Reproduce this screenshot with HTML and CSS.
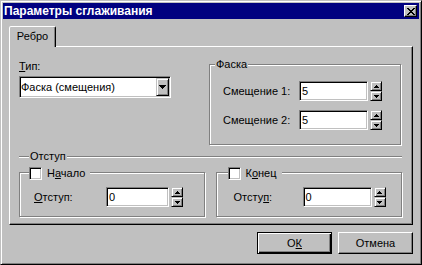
FILE: index.html
```html
<html>
  <head>
    <link rel="stylesheet" href="styles.css">
  </head>
  <body>
  <div class="window">
    <div class="titlebar">
      <span class="title">Параметры сглаживания</span>
      <span class="close">
        <svg width="8" height="7" viewBox="0 0 8 7">
          <rect x="0" y="0" width="2" height="1"/><rect x="6" y="0" width="2" height="1"/>
          <rect x="1" y="1" width="2" height="1"/><rect x="5" y="1" width="2" height="1"/>
          <rect x="2" y="2" width="4" height="1"/>
          <rect x="3" y="3" width="2" height="1"/>
          <rect x="2" y="4" width="4" height="1"/>
          <rect x="1" y="5" width="2" height="1"/><rect x="5" y="5" width="2" height="1"/>
          <rect x="0" y="6" width="2" height="1"/><rect x="6" y="6" width="2" height="1"/>
        </svg>
      </span>
    </div>
    <div class="body">
      <div class="tabs"><div class="tab">Ребро</div></div>
      <div class="panel">
        <div class="top-row">
          <div class="type-col">
            <div class="label"><u>Т</u>ип:</div>
            <div class="combo">
              <span class="combo-text">Фаска (смещения)</span>
              <span class="bevel-btn drop-btn">
                <svg width="7" height="4" viewBox="0 0 7 4"><path d="M0 0h7v1H6v1H5v1H4v1H3V3H2V2H1V1H0z"/></svg>
              </span>
            </div>
          </div>
          <div class="group fas">
            <div class="group-title">Фаска</div>
            <div class="group-body">
              <div class="field">
                <span class="field-label">Смещение 1:</span>
                <span class="edit">5</span>
                <span class="spin">
                  <span class="bevel-btn spin-btn"><svg width="5" height="3" viewBox="0 0 5 3"><path d="M2 0h1v1h1v1h1v1H0V2h1V1h1z"/></svg></span>
                  <span class="bevel-btn spin-btn"><svg width="5" height="3" viewBox="0 0 5 3"><path d="M0 0h5v1H4v1H3v1H2V2H1V1H0z"/></svg></span>
                </span>
              </div>
              <div class="field">
                <span class="field-label">Смещение 2:</span>
                <span class="edit">5</span>
                <span class="spin">
                  <span class="bevel-btn spin-btn"><svg width="5" height="3" viewBox="0 0 5 3"><path d="M2 0h1v1h1v1h1v1H0V2h1V1h1z"/></svg></span>
                  <span class="bevel-btn spin-btn"><svg width="5" height="3" viewBox="0 0 5 3"><path d="M0 0h5v1H4v1H3v1H2V2H1V1H0z"/></svg></span>
                </span>
              </div>
            </div>
          </div>
        </div>

        <div class="group indent">
          <div class="group-title">Отступ</div>
          <div class="indent-row">
            <div class="group start">
              <div class="group-title check-title"><span class="checkbox"></span><span>Н<u>а</u>чало</span></div>
              <div class="group-body">
                <div class="field">
                  <span class="field-label"><u>О</u>тступ:</span>
                  <span class="edit">0</span>
                  <span class="spin">
                    <span class="bevel-btn spin-btn"><svg width="5" height="3" viewBox="0 0 5 3"><path d="M2 0h1v1h1v1h1v1H0V2h1V1h1z"/></svg></span>
                    <span class="bevel-btn spin-btn"><svg width="5" height="3" viewBox="0 0 5 3"><path d="M0 0h5v1H4v1H3v1H2V2H1V1H0z"/></svg></span>
                  </span>
                </div>
              </div>
            </div>
            <div class="group end">
              <div class="group-title check-title"><span class="checkbox"></span><span>К<u>о</u>нец</span></div>
              <div class="group-body">
                <div class="field">
                  <span class="field-label">Отсту<u>п</u>:</span>
                  <span class="edit">0</span>
                  <span class="spin">
                    <span class="bevel-btn spin-btn"><svg width="5" height="3" viewBox="0 0 5 3"><path d="M2 0h1v1h1v1h1v1H0V2h1V1h1z"/></svg></span>
                    <span class="bevel-btn spin-btn"><svg width="5" height="3" viewBox="0 0 5 3"><path d="M0 0h5v1H4v1H3v1H2V2H1V1H0z"/></svg></span>
                  </span>
                </div>
              </div>
            </div>
          </div>
        </div>
      </div>
      <div class="buttons">
        <div class="btn default">О<u>К</u></div>
        <div class="btn">Отмена</div>
      </div>
    </div>
  </div>
  </body>
</html>
```

FILE: styles.css
```css
body {
  margin: 0;
  font-family: "Liberation Sans", Arial, sans-serif;
  font-size: 11px;
  line-height: 13px;
  color: #000;
  background: #c0c0c0;
}

.window {
  width: 422px;
  height: 265px;
  box-sizing: border-box;
  padding: 2px;
  background: #c0c0c0;
  border: 1px solid;
  border-color: #c0c0c0 #000 #000 #c0c0c0;
  box-shadow: inset 1px 1px #fff, inset -1px -1px #808080;
}

.titlebar {
  height: 16px;
  background: #000080;
  color: #fff;
  display: flex;
  align-items: center;
  justify-content: space-between;
  padding: 0 2px 0 1px;
}

.title {
  font-weight: bold;
  font-size: 12px;
}

.close {
  width: 13px;
  height: 12px;
  box-sizing: border-box;
  background: #c0c0c0;
  border: 1px solid;
  border-color: #fff #000 #000 #fff;
  box-shadow: inset -1px -1px #808080;
  display: flex;
  align-items: center;
  justify-content: center;
}

.body {
  padding: 7px 6px 0;
}

.tab {
  width: 47px;
  height: 21px;
  box-sizing: border-box;
  border-style: solid;
  border-width: 1px 1px 0 1px;
  border-color: #fff #000 transparent #fff;
  border-radius: 2px 2px 0 0;
  box-shadow: inset -1px 0 #808080;
  padding-top: 3px;
  text-align: center;
  background: #c0c0c0;
  position: relative;
  z-index: 1;
  margin-bottom: -1px;
}

.panel {
  height: 179px;
  box-sizing: border-box;
  border: 1px solid;
  border-color: #fff #000 #000 #fff;
  box-shadow: inset -1px -1px #808080;
  padding: 13px 0 0 9px;
}

.top-row {
  display: flex;
  align-items: flex-start;
}

.type-col {
  width: 152px;
}

.type-col .label {
  margin-bottom: 3px;
}

.combo {
  display: flex;
  height: 22px;
  box-sizing: border-box;
  background: #fff;
  border: 1px solid;
  border-color: #808080 #fff #fff #808080;
  box-shadow: inset 1px 1px #000, inset -1px -1px #c0c0c0;
  padding: 1px;
}

.combo-text {
  flex: 1;
  padding-top: 3px;
}

.bevel-btn {
  box-sizing: border-box;
  background: #c0c0c0;
  border: 1px solid;
  border-color: #c0c0c0 #000 #000 #c0c0c0;
  box-shadow: inset 1px 1px #fff, inset -1px -1px #808080;
  display: flex;
  align-items: center;
  justify-content: center;
}

.drop-btn {
  width: 13px;
}

.spin {
  display: flex;
  flex-direction: column;
  margin-left: 2px;
}

.spin-btn {
  width: 12px;
  height: 10px;
}

/* etched group box */
.group {
  border: 1px solid #808080;
  box-shadow: inset 1px 1px #fff, 1px 1px #fff;
}

.group-title {
  display: flex;
  align-items: center;
  width: fit-content;
  height: 13px;
  margin: -7px 0 0 5px;
  padding: 0 1px;
  background: #c0c0c0;
}

.fas {
  width: 190px;
  margin: 4px 0 0 38px;
}

.fas .group-body {
  display: flex;
  flex-direction: column;
  gap: 9px;
  padding: 10px 0 14px 13px;
}

.field {
  display: flex;
  align-items: center;
}

.field-label {
  width: 76px;
}

.edit {
  width: 69px;
  height: 20px;
  box-sizing: border-box;
  background: #fff;
  border: 1px solid;
  border-color: #808080 #fff #fff #808080;
  box-shadow: inset 1px 1px #000, inset -1px -1px #c0c0c0;
  padding: 3px 0 0 2px;
}

.indent {
  width: 383px;
  margin-top: 11px;
  border-width: 1px 0 0;
  box-shadow: inset 0 1px #fff;
}

.indent > .group-title {
  margin-left: 10px;
}

.indent-row {
  display: flex;
  margin-top: 9px;
}

.check-title {
  gap: 5px;
  margin: -6px 0 0 9px;
  padding: 0 5px 0 0;
}

.checkbox {
  width: 13px;
  height: 13px;
  box-sizing: border-box;
  background: #fff;
  border: 1px solid;
  border-color: #808080 #fff #fff #808080;
  box-shadow: inset 1px 1px #000, inset -1px -1px #c0c0c0;
}

.start {
  width: 184px;
}

.start .group-body {
  padding: 7px 0 9px 14px;
}

.start .field-label {
  width: 72px;
}

.start .edit {
  width: 63px;
}

.end {
  width: 185px;
  margin-left: 11px;
}

.end .check-title {
  margin-left: 11px;
}

.end .group-body {
  padding: 7px 0 9px 17px;
}

.end .field-label {
  width: 69px;
}

.buttons {
  display: flex;
  justify-content: flex-end;
  gap: 6px;
  margin-top: 7px;
}

.btn {
  width: 75px;
  height: 22px;
  box-sizing: border-box;
  border: 1px solid;
  border-color: #fff #000 #000 #fff;
  box-shadow: inset -1px -1px #808080;
  display: flex;
  align-items: center;
  justify-content: center;
}

.btn.default {
  border-color: #000;
  box-shadow: inset 1px 1px #fff, inset -1px -1px #000, inset -2px -2px #808080;
}
```
